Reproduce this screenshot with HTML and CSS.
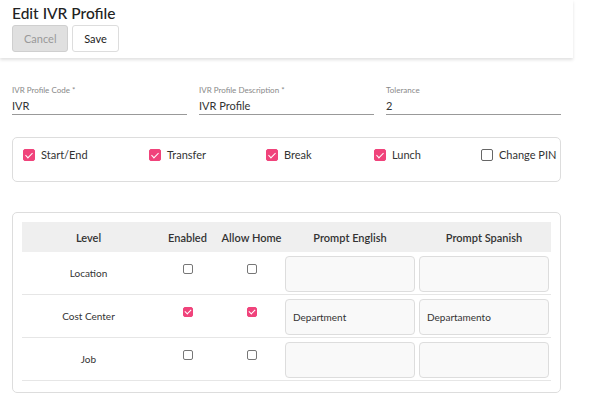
FILE: index.html
```html
<!DOCTYPE html>
<html lang="en">
<head>
  <meta charset="UTF-8" />
  <meta name="viewport" content="width=device-width, initial-scale=1.0" />
  <title>Edit IVR Profile</title>
  <link rel="stylesheet" href="styles.css">
</head>
<body>
  <div class="topbar">
    <h1>Edit IVR Profile</h1>
    <div class="acciones">
      <button class="btn btn-cancel" disabled>Cancel</button>
      <button class="btn btn-save">Save</button>
    </div>
  </div>

  <div class="contenido">
    <div class="campos">
      <div class="campo">
        <label>IVR Profile Code *</label>
        <div class="valor">IVR</div>
      </div>
      <div class="campo">
        <label>IVR Profile Description *</label>
        <div class="valor">IVR Profile</div>
      </div>
      <div class="campo">
        <label>Tolerance</label>
        <div class="valor">2</div>
      </div>
    </div>

    <div class="tarjeta opciones">
      <div class="opcion"><span class="caja on"></span>Start/End</div>
      <div class="opcion"><span class="caja on"></span>Transfer</div>
      <div class="opcion"><span class="caja on"></span>Break</div>
      <div class="opcion"><span class="caja on"></span>Lunch</div>
      <div class="opcion"><span class="caja"></span>Change PIN</div>
    </div>

    <div class="tarjeta tabla-wrap">
      <table class="niveles">
        <thead>
          <tr>
            <th class="c-level">Level</th>
            <th class="c-en">Enabled</th>
            <th class="c-home">Allow Home</th>
            <th class="c-prompt">Prompt English</th>
            <th class="c-prompt">Prompt Spanish</th>
          </tr>
        </thead>
        <tbody>
          <tr>
            <td>Location</td>
            <td class="chk"><span class="caja mini"></span></td>
            <td class="chk"><span class="caja mini"></span></td>
            <td class="prompt"><div class="entrada"></div></td>
            <td class="prompt"><div class="entrada"></div></td>
          </tr>
          <tr>
            <td>Cost Center</td>
            <td class="chk"><span class="caja mini on"></span></td>
            <td class="chk"><span class="caja mini on"></span></td>
            <td class="prompt"><div class="entrada">Department</div></td>
            <td class="prompt"><div class="entrada">Departamento</div></td>
          </tr>
          <tr>
            <td>Job</td>
            <td class="chk"><span class="caja mini"></span></td>
            <td class="chk"><span class="caja mini"></span></td>
            <td class="prompt"><div class="entrada"></div></td>
            <td class="prompt"><div class="entrada"></div></td>
          </tr>
        </tbody>
      </table>
    </div>
  </div>
</body>
</html>
```

FILE: styles.css
```css
body {
  margin: 0;
  padding: 0;
  font-family: Lato, 'Open Sans', sans-serif;
  background-color: #fff;
  color: #333;
}

.topbar {
  width: 549px;
  padding: 3px 12px 6px;
  box-shadow: 0 2px 3px rgba(0, 0, 0, 0.12);
}

.topbar h1 {
  margin: 0 0 2px;
  font-size: 15.5px;
  font-weight: 500;
  line-height: 20px;
  color: #222;
}

.acciones {
  display: flex;
  gap: 4px;
}

.btn {
  height: 27px;
  padding: 0 11px;
  font-family: inherit;
  font-size: 11px;
  border-radius: 3px;
  border: 1px solid #ddd;
  background-color: #fff;
  color: #222;
}

.btn-cancel {
  width: 56px;
  background-color: #e0e0e0;
  border-color: #cfcfcf;
  color: #999;
}

.btn-save {
  width: 47px;
}

.contenido {
  padding: 0 12px;
}

.campos {
  display: grid;
  grid-template-columns: repeat(3, 175px);
  gap: 12px;
  margin-top: 27px;
}

.campo label {
  display: block;
  font-size: 8px;
  line-height: 10px;
  color: #888;
}

.campo .valor {
  font-size: 11px;
  line-height: 17px;
  padding-top: 2px;
  border-bottom: 1px solid #999;
}

.tarjeta {
  box-sizing: border-box;
  width: 549px;
  border: 1px solid #ddd;
  border-radius: 5px;
}

.opciones {
  margin-top: 22px;
  height: 45px;
  padding: 11px 0 0 10px;
  display: grid;
  grid-template-columns: 126px 117px 108px 107px auto;
  align-items: start;
}

.opcion {
  display: flex;
  align-items: center;
  gap: 6px;
  font-size: 11px;
  line-height: 12px;
  color: #333;
}

.caja {
  display: inline-block;
  box-sizing: border-box;
  width: 12px;
  height: 12px;
  border: 1.5px solid #666;
  border-radius: 2px;
  position: relative;
}

.caja.on {
  background-color: #f0437b;
  border-color: #f0437b;
}

/* marca blanca dentro de la casilla */
.caja.on::after {
  content: '';
  position: absolute;
  left: 3px;
  top: 1px;
  width: 3px;
  height: 6px;
  border: solid #fff;
  border-width: 0 1px 1px 0;
  transform: rotate(45deg);
}

.caja.mini {
  width: 10px;
  height: 10px;
  border-width: 1.5px;
  border-color: #777;
}

.caja.mini.on {
  border-color: #f0437b;
}

.caja.mini.on::after {
  left: 2px;
  top: 0;
  width: 3px;
  height: 5px;
}

.tabla-wrap {
  margin-top: 30px;
  padding: 9px 10px 11px 9px;
}

.niveles {
  width: 529px;
  border-collapse: collapse;
  table-layout: fixed;
  font-size: 10px;
  color: #333;
}

.niveles th {
  height: 30px;
  padding: 0;
  background-color: #efefef;
  font-weight: 600;
  font-size: 11px;
  color: #333;
}

.c-level { width: 133px; }
.c-en { width: 65px; }
.c-home { width: 63px; }
.c-prompt { width: 134px; }

.niveles td {
  height: 42px;
  padding: 0;
  text-align: center;
  border-bottom: 1px solid #e6e6e6;
}

.niveles td.chk {
  padding-bottom: 6px;
  height: 36px;
}

.niveles td.prompt {
  padding: 3px 2px 2px;
  height: 37px;
}

.entrada {
  box-sizing: border-box;
  height: 36px;
  padding: 11px 7px 0;
  text-align: left;
  border: 1px solid #ddd;
  border-radius: 4px;
  background-color: #f9f9f9;
  font-size: 10px;
  line-height: 12px;
}
```
